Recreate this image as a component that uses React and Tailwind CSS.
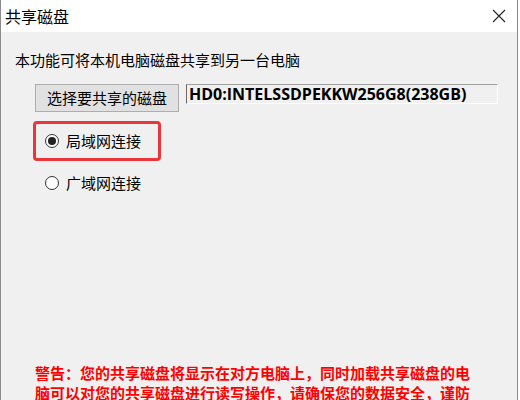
import React from "react";

const cjk = { fontFamily: '"Noto Sans CJK SC", "Noto Sans", sans-serif' };

function Radio({ checked, label }) {
  return (
    <div className="flex items-center h-5">
      <span className="w-[14px] h-[14px] rounded-full border border-[#333] bg-white flex items-center justify-center">
        {checked && <span className="w-[8px] h-[8px] rounded-full bg-[#222]" />}
      </span>
      <span className="ml-[7px] text-[15px] leading-5 text-black">{label}</span>
    </div>
  );
}

export default function App() {
  return (
    <div className="w-[520px] h-[400px] bg-white overflow-hidden" style={cjk}>
      <div className="w-[518px] h-[400px] border-l border-r border-[#8a8a8a] bg-[#f0f0f0] flex flex-col">
        <div className="h-8 bg-white flex items-center justify-between shrink-0">
          <span className="ml-[4px] text-[16px] leading-5 text-black">共享磁盘</span>
          <svg width="14" height="14" viewBox="0 0 14 14" className="mr-[11px]">
            <path d="M1 1 L13 13 M13 1 L1 13" stroke="#222" strokeWidth="1.1" fill="none" />
          </svg>
        </div>
        <div className="flex flex-col pl-[14px]">
          <div className="mt-[18px] text-[15px] leading-5 text-black">本功能可将本机电脑磁盘共享到另一台电脑</div>
          <div className="mt-[14px] ml-[20px] flex items-start">
            <div className="w-[144px] h-[28px] bg-[#e1e1e1] border border-[#adadad] flex items-center justify-center text-[15px] text-black">
              选择要共享的磁盘
            </div>
            <div className="ml-[7px] w-[312px] h-[20px] border-t border-l border-t-[#a0a0a0] border-l-[#696969] border-r border-b border-r-white border-b-white bg-[#f0f0f0] flex items-center">
              <span
                className="ml-[2px] text-[16px] font-bold text-black leading-none"
                style={{ fontFamily: '"Open Sans", "Noto Sans", sans-serif' }}
              >
                HD0:INTELSSDPEKKW256G8(238GB)
              </span>
            </div>
          </div>
          <div className="mt-[9px] ml-[18px] w-[128px] h-[40px] border-[3px] border-[#e8363b] rounded-[4px] flex items-center pl-[9px]">
            <Radio checked label="局域网连接" />
          </div>
          <div className="mt-[12px] ml-[30px]">
            <Radio label="广域网连接" />
          </div>
          <div className="mt-[170px] ml-[20px] text-[15px] leading-5 font-bold text-[#ff0000]">
            <div>警告：您的共享磁盘将显示在对方电脑上，同时加载共享磁盘的电</div>
            <div>脑可以对您的共享磁盘进行读写操作，请确保您的数据安全，谨防</div>
          </div>
        </div>
      </div>
    </div>
  );
}
